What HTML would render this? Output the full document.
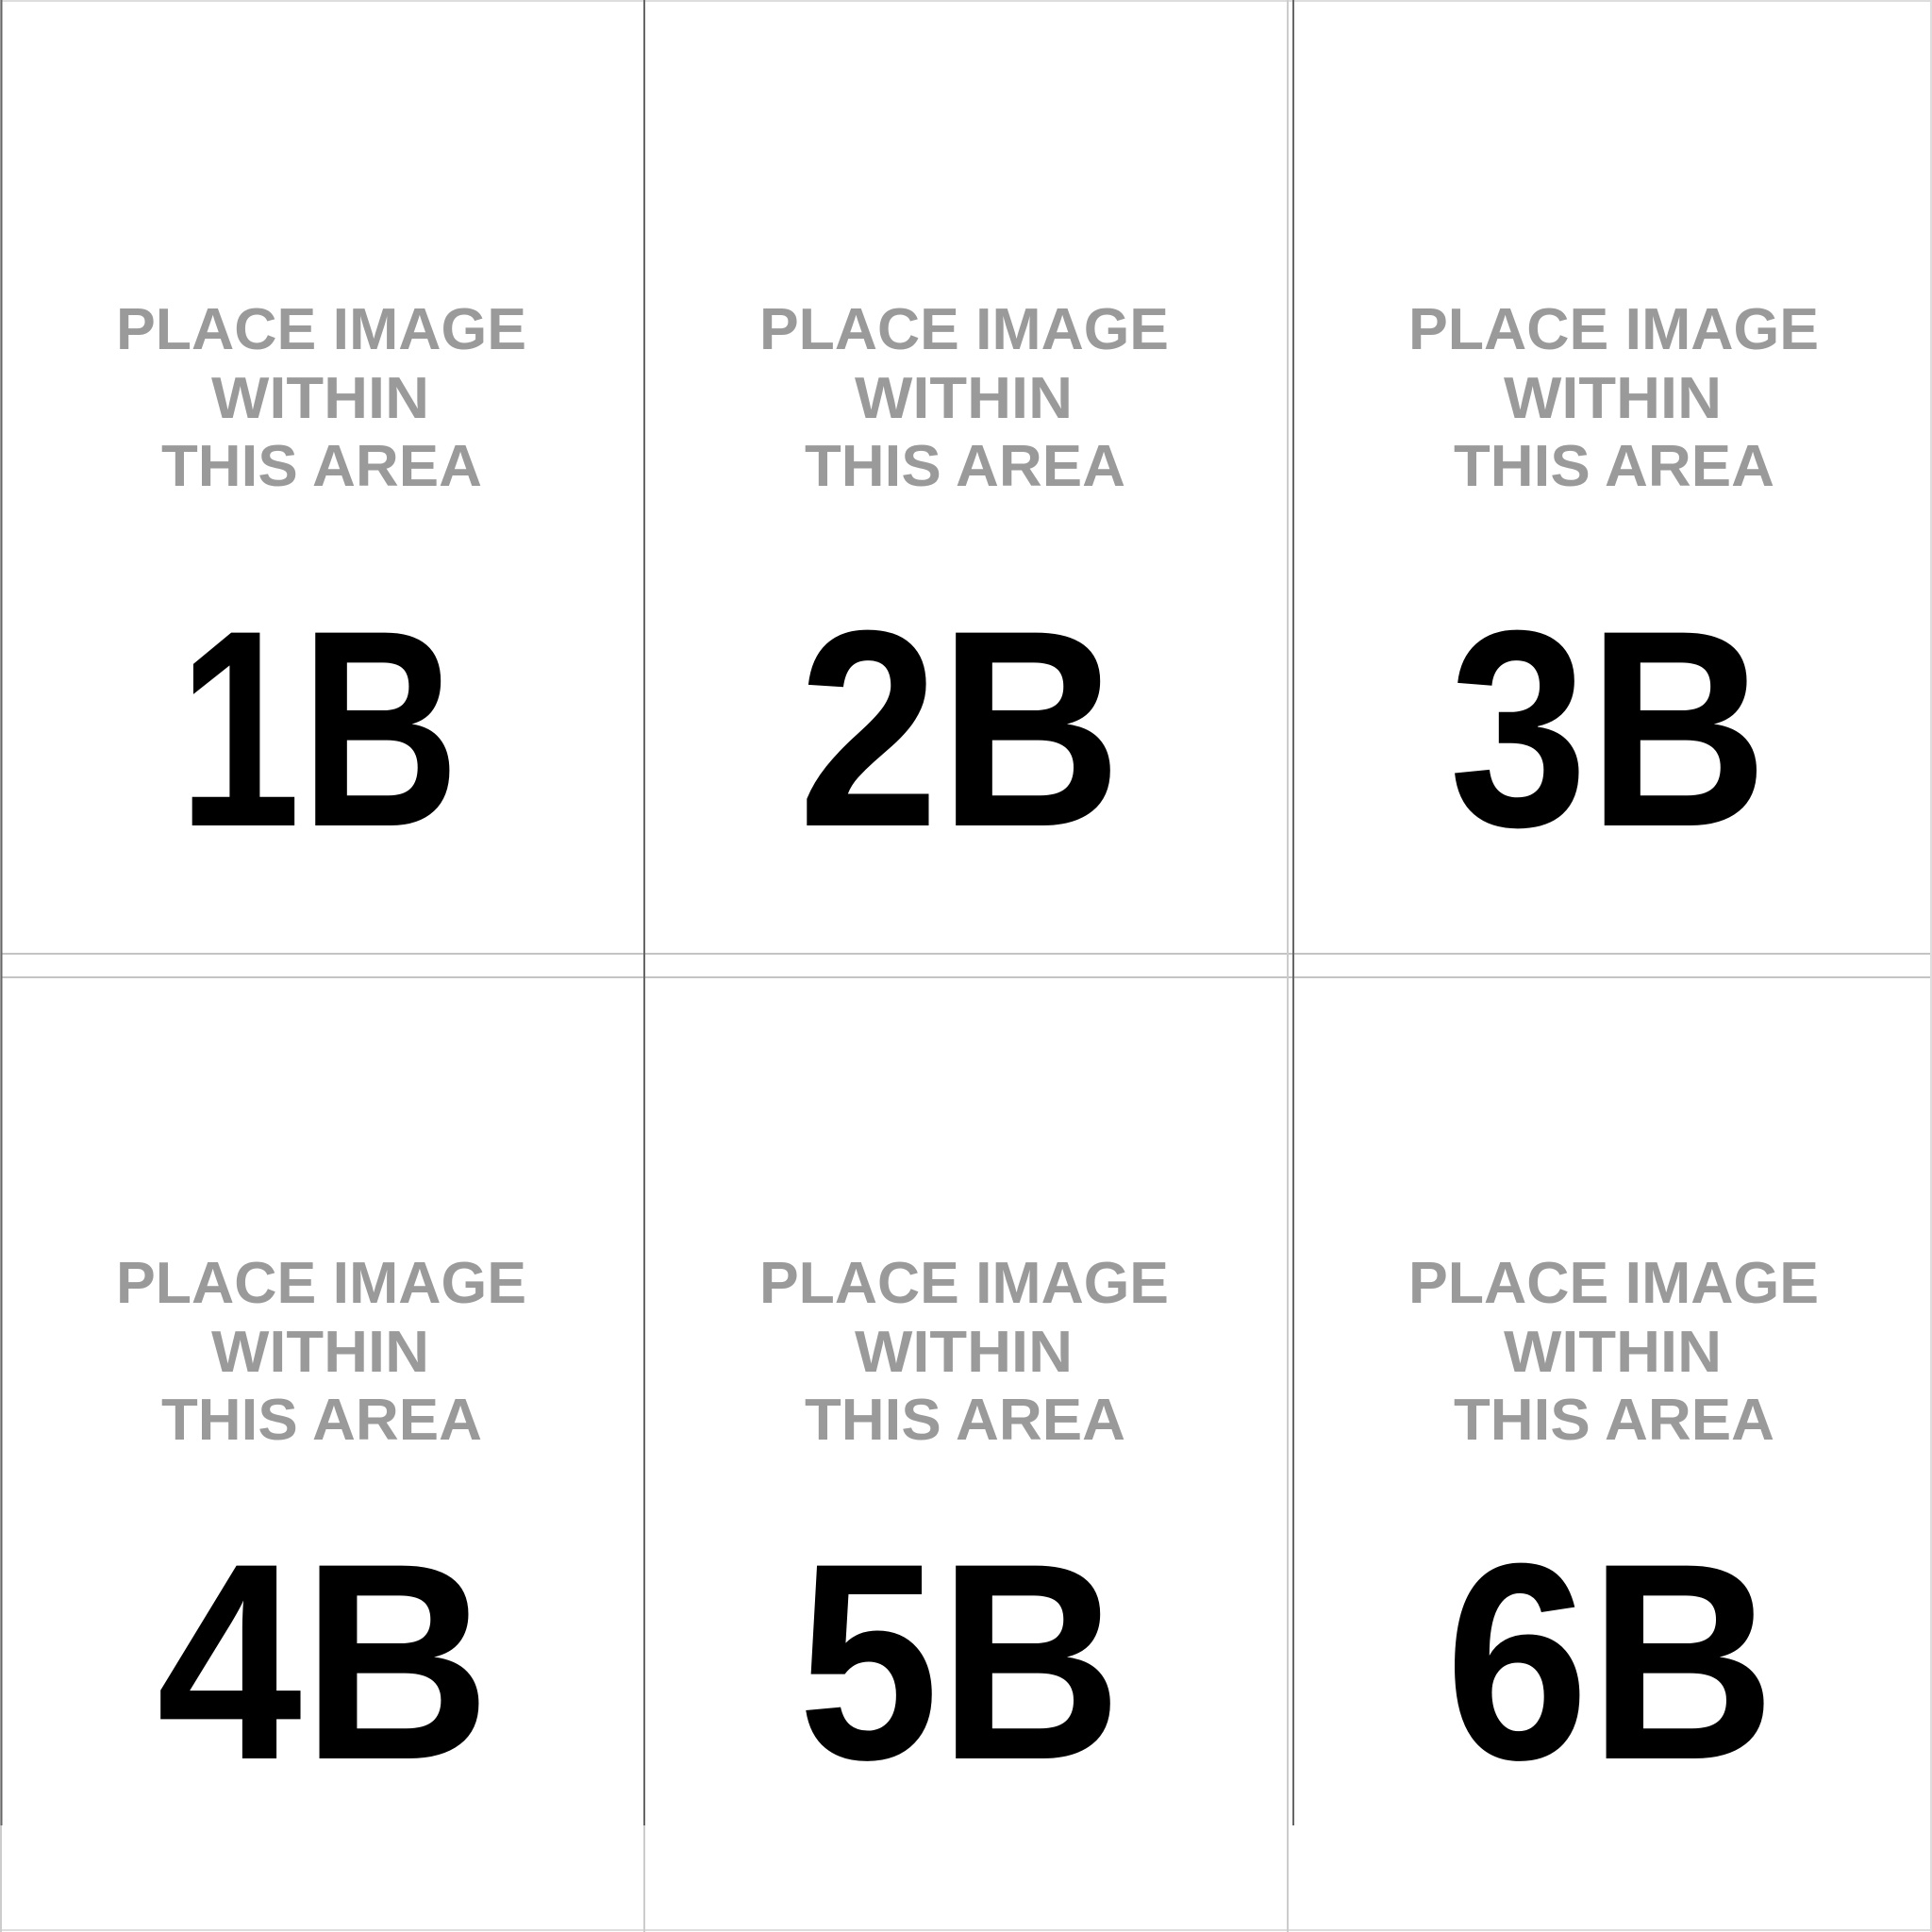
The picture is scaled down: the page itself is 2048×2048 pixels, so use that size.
<!DOCTYPE html>
<html><head><style>
html,body{margin:0;padding:0;background:#fff;}
svg{display:block}
.g{font-family:"Liberation Sans",sans-serif;font-weight:bold;fill:#9a9a9a;font-size:62px}
.n{font-family:"Liberation Sans",sans-serif;font-weight:bold;fill:#000;font-size:297px}
</style></head><body>
<svg width="2048" height="2048" viewBox="0 0 2048 2048" xmlns="http://www.w3.org/2000/svg">
<rect width="2048" height="2048" fill="#fff"/>
<line x1="0" y1="1011" x2="2048" y2="1011" stroke="#c4c4c4" stroke-width="2"/>
<line x1="0" y1="1036" x2="2048" y2="1036" stroke="#c4c4c4" stroke-width="2"/>
<line x1="0" y1="2046" x2="2048" y2="2046" stroke="#ddd" stroke-width="2"/>
<line x1="0" y1="1" x2="2048" y2="1" stroke="#ddd" stroke-width="2"/>
<line x1="1" y1="0" x2="1" y2="2048" stroke="#ccc" stroke-width="2"/>
<line x1="1.5" y1="0" x2="1.5" y2="1935" stroke="#666" stroke-width="2"/>
<line x1="683" y1="0" x2="683" y2="2048" stroke="#ccc" stroke-width="2"/>
<line x1="683" y1="0" x2="683" y2="1935" stroke="#666" stroke-width="2"/>
<line x1="1365" y1="0" x2="1365" y2="2048" stroke="#ccc" stroke-width="2"/>
<line x1="1371" y1="0" x2="1371" y2="1935" stroke="#666" stroke-width="2"/>
<line x1="2047" y1="0" x2="2047" y2="2048" stroke="#ddd" stroke-width="2"/>

<g class="g">
<text x="123" y="370" textLength="435" lengthAdjust="spacingAndGlyphs">PLACE IMAGE</text>
<text x="224" y="443" textLength="231" lengthAdjust="spacingAndGlyphs">WITHIN</text>
<text x="171" y="515" textLength="340" lengthAdjust="spacingAndGlyphs">THIS AREA</text>
<text x="805" y="370" textLength="434" lengthAdjust="spacingAndGlyphs">PLACE IMAGE</text>
<text x="906" y="443" textLength="231" lengthAdjust="spacingAndGlyphs">WITHIN</text>
<text x="853" y="515" textLength="340" lengthAdjust="spacingAndGlyphs">THIS AREA</text>
<text x="1493" y="370" textLength="435" lengthAdjust="spacingAndGlyphs">PLACE IMAGE</text>
<text x="1594" y="443" textLength="231" lengthAdjust="spacingAndGlyphs">WITHIN</text>
<text x="1541" y="515" textLength="340" lengthAdjust="spacingAndGlyphs">THIS AREA</text>

<text x="123" y="1381" textLength="435" lengthAdjust="spacingAndGlyphs">PLACE IMAGE</text>
<text x="224" y="1454" textLength="231" lengthAdjust="spacingAndGlyphs">WITHIN</text>
<text x="171" y="1526" textLength="340" lengthAdjust="spacingAndGlyphs">THIS AREA</text>
<text x="805" y="1381" textLength="434" lengthAdjust="spacingAndGlyphs">PLACE IMAGE</text>
<text x="906" y="1454" textLength="231" lengthAdjust="spacingAndGlyphs">WITHIN</text>
<text x="853" y="1526" textLength="340" lengthAdjust="spacingAndGlyphs">THIS AREA</text>
<text x="1493" y="1381" textLength="435" lengthAdjust="spacingAndGlyphs">PLACE IMAGE</text>
<text x="1594" y="1454" textLength="231" lengthAdjust="spacingAndGlyphs">WITHIN</text>
<text x="1541" y="1526" textLength="340" lengthAdjust="spacingAndGlyphs">THIS AREA</text>
</g>

<g class="n">
<text x="189" y="875" textLength="298" lengthAdjust="spacingAndGlyphs">1B</text>
<text x="846" y="875" textLength="343" lengthAdjust="spacingAndGlyphs">2B</text>
<text x="1536" y="875" textLength="338" lengthAdjust="spacingAndGlyphs">3B</text>
<text x="166" y="1864" textLength="354" lengthAdjust="spacingAndGlyphs">4B</text>
<text x="846" y="1864" textLength="343" lengthAdjust="spacingAndGlyphs">5B</text>
<text x="1532" y="1864" textLength="350" lengthAdjust="spacingAndGlyphs">6B</text>
</g>
</svg>
</body></html>
